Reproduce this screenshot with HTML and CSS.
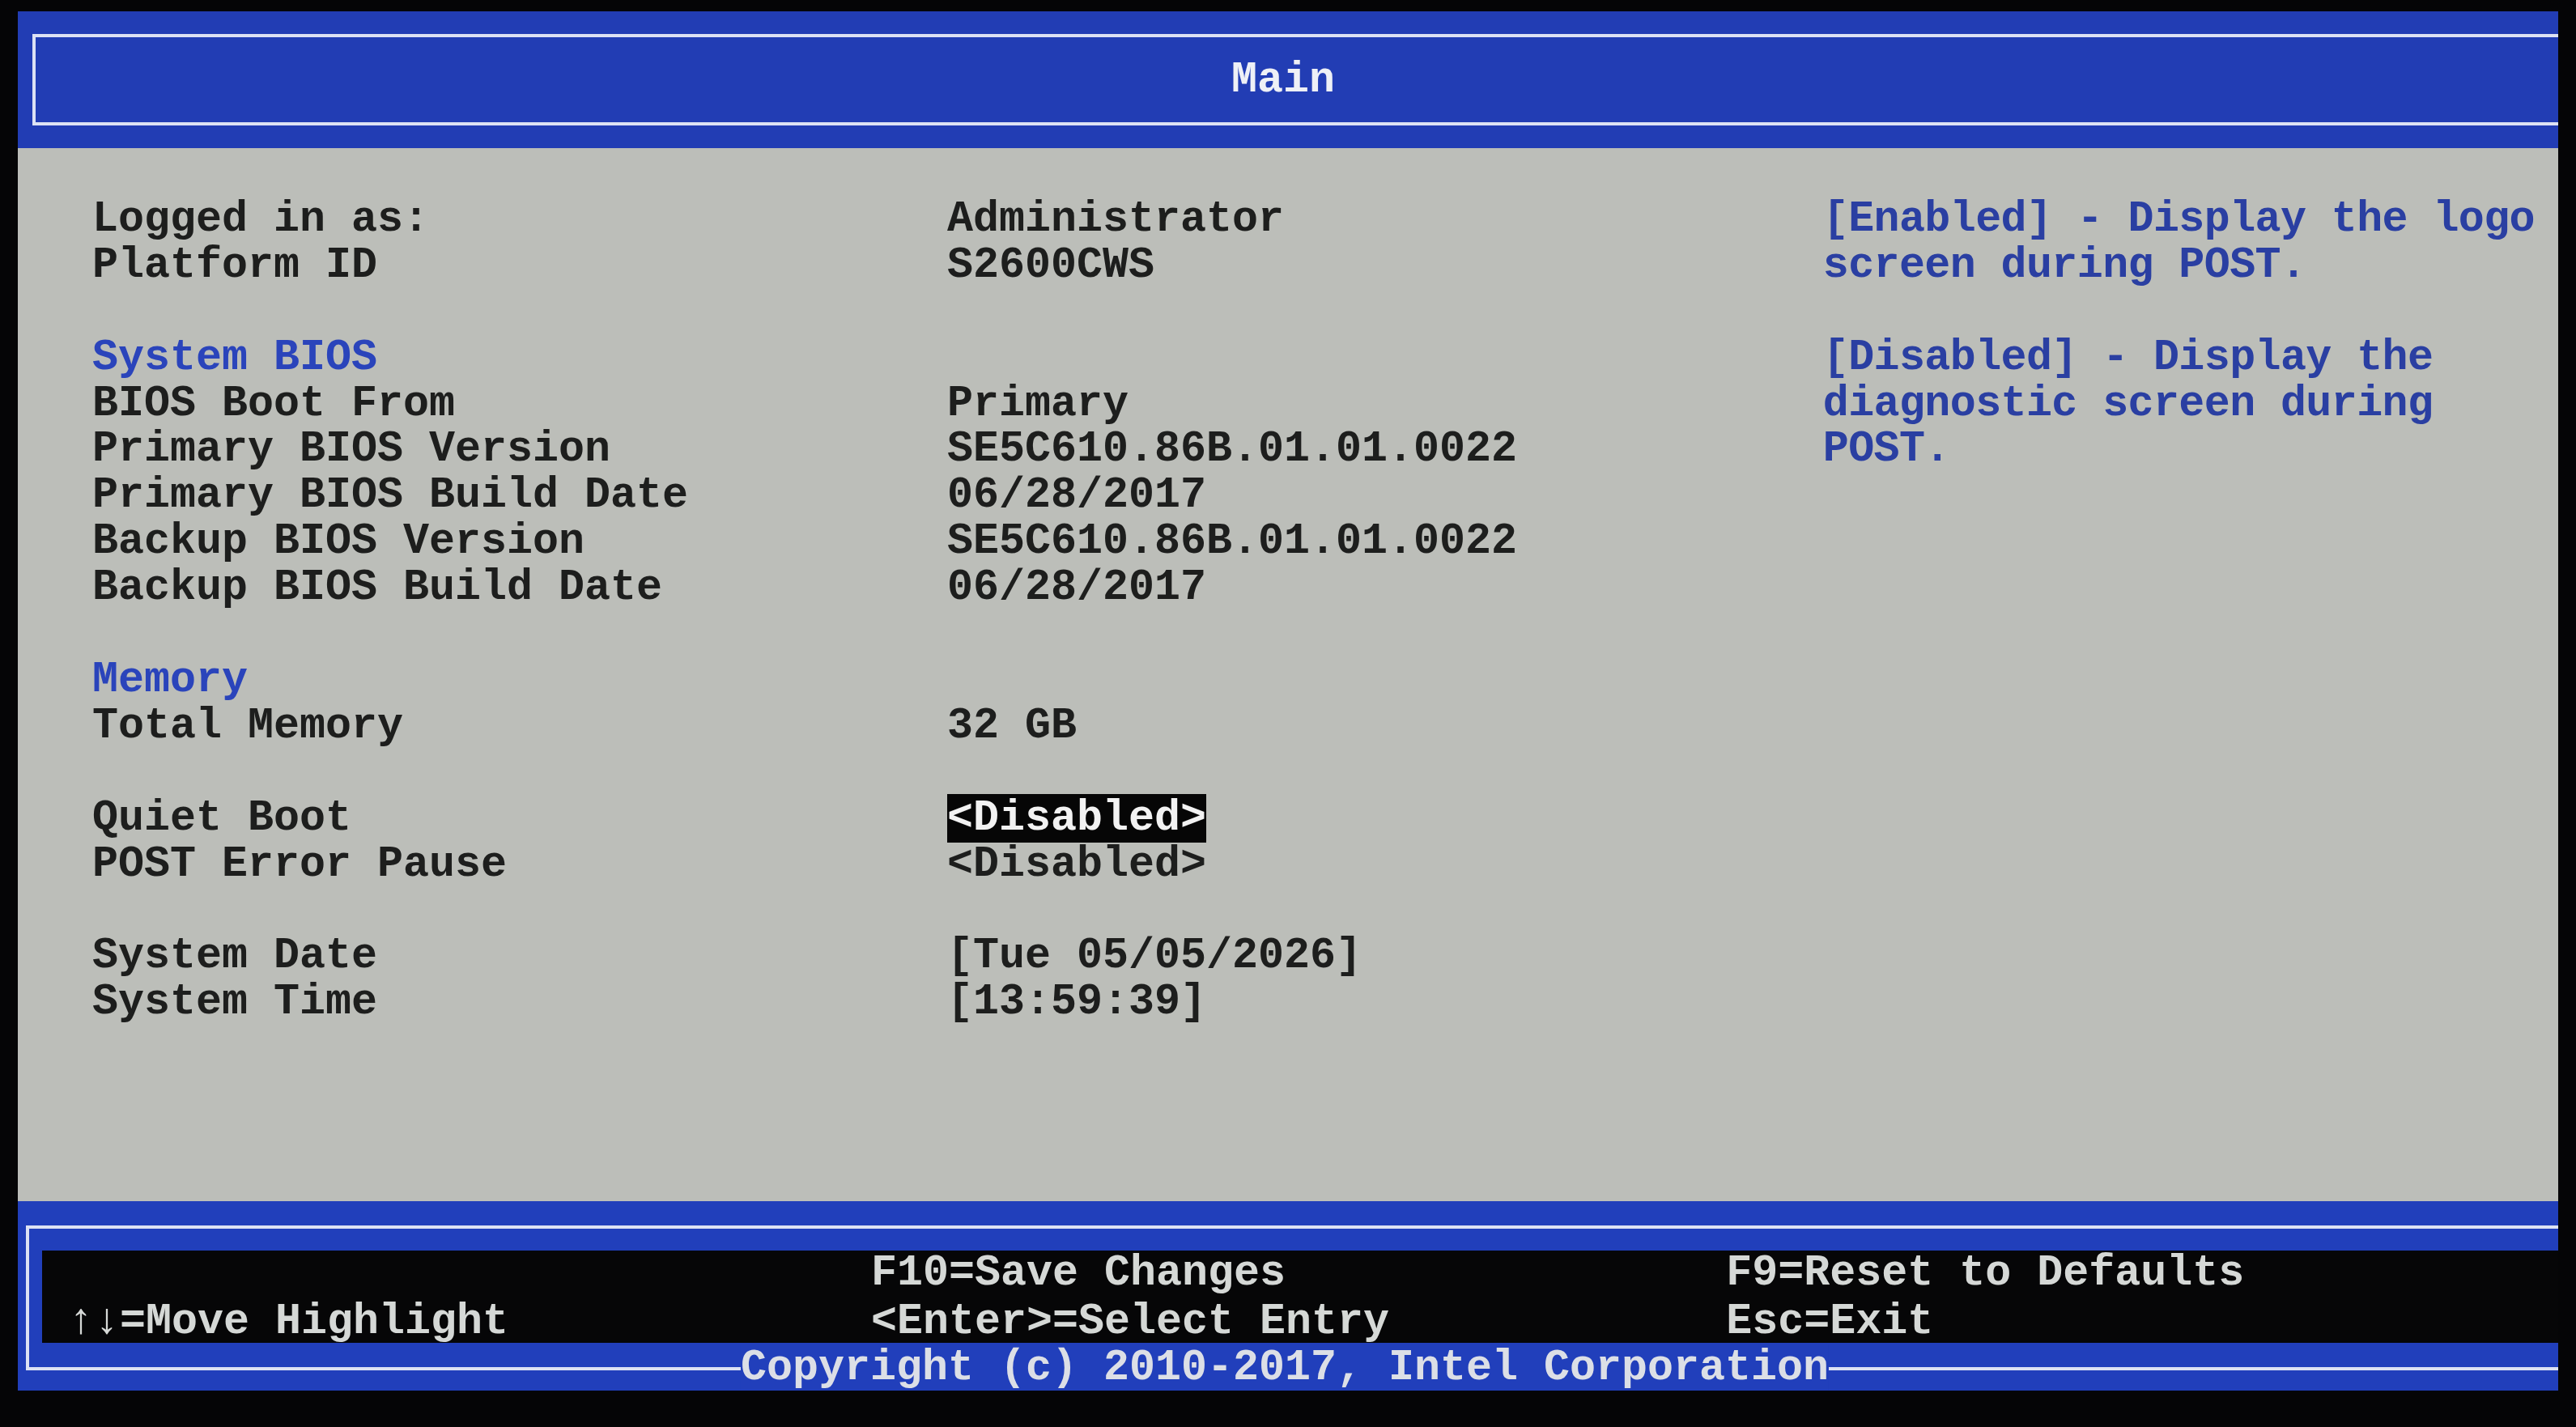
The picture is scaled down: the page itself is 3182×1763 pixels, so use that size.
FILE: index.html
```html
<!DOCTYPE html>
<html lang="en">
<head>
    <meta charset="UTF-8">
    <title>Main</title>
    <link rel="stylesheet" href="styles.css">
</head>
<body>
    <div class="screen">
        <!-- Title bar -->
        <header class="title-bar">
            <div class="title-box">Main</div>
        </header>

        <!-- Settings and help -->
        <main class="page">
            <section class="settings">
                <div class="group">
                    <div class="row"><span class="label">Logged in as:</span><span class="value">Administrator</span></div>
                    <div class="row"><span class="label">Platform ID</span><span class="value">S2600CWS</span></div>
                </div>
                <div class="group">
                    <div class="group-title">System BIOS</div>
                    <div class="row"><span class="label">BIOS Boot From</span><span class="value">Primary</span></div>
                    <div class="row"><span class="label">Primary BIOS Version</span><span class="value">SE5C610.86B.01.01.0022</span></div>
                    <div class="row"><span class="label">Primary BIOS Build Date</span><span class="value">06/28/2017</span></div>
                    <div class="row"><span class="label">Backup BIOS Version</span><span class="value">SE5C610.86B.01.01.0022</span></div>
                    <div class="row"><span class="label">Backup BIOS Build Date</span><span class="value">06/28/2017</span></div>
                </div>
                <div class="group">
                    <div class="group-title">Memory</div>
                    <div class="row"><span class="label">Total Memory</span><span class="value">32 GB</span></div>
                </div>
                <div class="group">
                    <div class="row"><span class="label">Quiet Boot</span><span class="value"><span class="selected">&lt;Disabled&gt;</span></span></div>
                    <div class="row"><span class="label">POST Error Pause</span><span class="value">&lt;Disabled&gt;</span></div>
                </div>
                <div class="group">
                    <div class="row"><span class="label">System Date</span><span class="value">[Tue 05/05/2026]</span></div>
                    <div class="row"><span class="label">System Time</span><span class="value">[13:59:39]</span></div>
                </div>
            </section>

            <aside class="help">
                <p>[Enabled] - Display the logo screen during POST.</p>
                <p>[Disabled] - Display the diagnostic screen during POST.</p>
            </aside>
        </main>

        <!-- Key legend -->
        <footer class="key-bar">
            <div class="key-box">
                <div class="keys">
                    <span></span>
                    <span>F10=Save Changes</span>
                    <span>F9=Reset to Defaults</span>
                    <span>↑↓=Move Highlight</span>
                    <span>&lt;Enter&gt;=Select Entry</span>
                    <span>Esc=Exit</span>
                </div>
                <div class="copyright">Copyright (c) 2010-2017, Intel Corporation</div>
            </div>
        </footer>
    </div>
</body>
</html>
```

FILE: styles.css
```css
/* Whole monitor area */
body {
    margin: 0;
    padding: 14px 22px 0 22px;
    background: #050506;
    font-family: 'Liberation Mono', 'DejaVu Sans Mono', monospace;
    font-size: 53.33px;
    font-weight: bold;
    line-height: 56.9px;
    color: #1d1e1d;
}

.screen {
    display: flex;
    flex-direction: column;
    height: 1704px;
}

/* Top title */
.title-bar {
    background: #223db4;
    padding: 28px 0 28px 18px;
}

.title-box {
    border: 4px solid #dde2f4;
    border-right: none;
    padding: 25px 34px 23px 0;
    text-align: center;
    color: #eef0f6;
}

/* Grey page */
.page {
    flex: 1;
    display: flex;
    background: #bcbeb9;
    padding: 60px 0 0 92px;
}

.settings {
    width: 66.8ch;
    flex-shrink: 0;
}

.group + .group {
    margin-top: 56.9px;
}

.group-title {
    color: #2a44bb;
}

.row {
    display: grid;
    grid-template-columns: 33ch 1fr;
    white-space: pre;
}

.selected {
    background: #060606;
    color: #f2f2f2;
}

.help {
    width: 29ch;
    color: #2a3fa2;
    letter-spacing: -0.6px;
}

.help p {
    margin: 0 0 56.9px 0;
}

/* Bottom key legend */
.key-bar {
    background: #213fbb;
    padding: 30px 0 25px 10px;
}

.key-box {
    position: relative;
    border: 4px solid #dde2f4;
    border-right: none;
    padding: 27px 0 30px 16px;
}

.keys {
    display: grid;
    grid-template-columns: 31ch 33ch 1fr;
    grid-auto-rows: 57px;
    align-items: center;
    background: #060607;
    padding-left: 1ch;
    color: #d5d8d6;
    white-space: pre;
}

.keys span:nth-child(n+4) {
    padding-top: 6px;
}

.copyright {
    position: absolute;
    left: 50%;
    bottom: -30px;
    transform: translateX(-50%);
    margin-left: -11px;
    background: #213fbb;
    color: #dcdfe6;
    white-space: pre;
}
```
